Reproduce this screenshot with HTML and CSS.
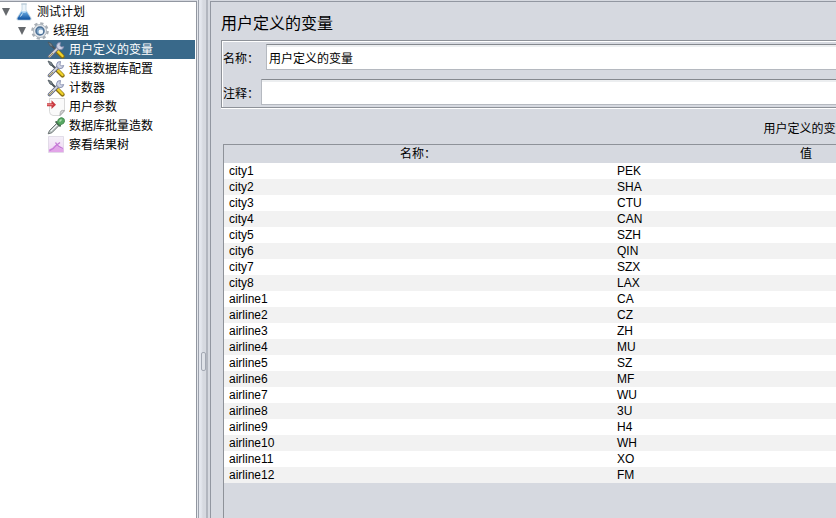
FILE: index.html
```html
<!doctype html>
<html lang="zh-CN">
  <head>
    <meta charset="UTF-8" />
    <meta name="viewport" content="width=device-width, initial-scale=1.0" />
    <title>用户定义的变量</title>
    <link rel="stylesheet" href="styles.css">
  </head>
  <body>
    <svg class="defs" width="0" height="0">
      <defs>
        <linearGradient id="flask-fill" x1="0" y1="0" x2="0" y2="1">
          <stop offset="0" stop-color="#6fb0e6" />
          <stop offset="1" stop-color="#0c4f9e" />
        </linearGradient>
        <linearGradient id="pink-fill" x1="0" y1="0" x2="0" y2="1">
          <stop offset="0" stop-color="#f4f0f8" />
          <stop offset="1" stop-color="#f0d6f4" />
        </linearGradient>
      </defs>
      <symbol id="tools" viewBox="0 0 18 18">
        <path d="M4 4 12 12" stroke="#4b5258" stroke-width="2" />
        <path d="M1 1 4.500 2.500 6 6 3 5z" fill="#7b858b" stroke="#4d575e" stroke-width=".8" />
        <path d="M10.500 10.500 15.500 15.500" stroke="#8a7010" stroke-width="4.200" stroke-linecap="round" />
        <path d="M10.700 10.200 15.500 15" stroke="#f0d32c" stroke-width="2.400" stroke-linecap="round" />
        <path d="M2.500 15.500 12 6" stroke="#666c80" stroke-width="3.600" stroke-linecap="round" />
        <path d="M2.500 15.300 12 5.800" stroke="#d3d5dc" stroke-width="1.800" stroke-linecap="round" />
        <path d="M13.500 1.500a3.600 3.600 0 1 0 3.200 4l-2.200.5-1.500-1.500z" fill="#ced3e4" stroke="#7981a6" stroke-width=".8" />
        <path d="M2 16 6 12" stroke="#a89b50" stroke-width="1" />
      </symbol>
    </svg>

    <nav class="tree">
      <ul>
        <li class="node">
          <svg class="arrow" viewBox="0 0 8 8"><path d="M0 0h8L4 8z" fill="#66696d" /></svg>
          <svg class="icon" viewBox="0 0 18 18">
            <path d="M7 1h4v6l5 8q.8 2-1 2H3q-1.800 0-1-2l5-8z" fill="#edf5fb" stroke="#b3c8d8" stroke-width=".7" />
            <path d="M6.500 8.500h5l4 6.500q.6 1.700-.9 1.700H3.400q-1.500 0-.9-1.700z" fill="url(#flask-fill)" />
            <path d="M6 1h6" stroke="#b9c9d4" />
            <ellipse cx="9" cy="9" rx="2.300" ry=".8" fill="#c7e3f7" />
            <path d="M5.500 13.500 7.500 10.500" stroke="#d8eefc" />
          </svg>
          <a href="#plan">测试计划</a>
        </li>
        <li class="node level-2">
          <svg class="arrow" viewBox="0 0 8 8"><path d="M0 0h8L4 8z" fill="#66696d" /></svg>
          <svg class="icon" viewBox="0 0 18 18">
            <circle cx="9" cy="9" r="7.600" fill="none" stroke="#a9afb6" stroke-width="2.400" stroke-dasharray="3.200 2.770" />
            <circle cx="9" cy="9" r="6.600" fill="#e1e4e8" stroke="#aab1b9" stroke-width=".8" />
            <circle cx="9" cy="9" r="4" fill="#7fa5c8" stroke="#4c6f94" stroke-width="1.500" />
            <circle cx="9.800" cy="9.800" r="2.300" fill="#f2f8fd" />
          </svg>
          <a href="#threads">线程组</a>
        </li>
        <li class="node level-3 selected">
          <svg class="icon"><use href="#tools" /></svg>
          <a href="#variables">用户定义的变量</a>
        </li>
        <li class="node level-3">
          <svg class="icon"><use href="#tools" /></svg>
          <a href="#database">连接数据库配置</a>
        </li>
        <li class="node level-3">
          <svg class="icon"><use href="#tools" /></svg>
          <a href="#counter">计数器</a>
        </li>
        <li class="node level-3">
          <svg class="icon" viewBox="0 0 18 18">
            <path d="M2.500.5h15v13l-4 4H6q-3.500-.5-3.500-4z" fill="#fafafa" stroke="#cfcfcf" stroke-width=".8" />
            <path d="M17.500 12.500q-2.500-.5-3.500.5t-1 4.500z" fill="#d6d6d6" stroke="#a0a0a0" stroke-width=".8" />
            <path d="M0 5.200h4.500V2.300L9 6.700l-4.500 4.400V8.300H0z" fill="#c93a40" />
            <path d="M0 6.700h6" stroke="#e98888" />
          </svg>
          <a href="#parameters">用户参数</a>
        </li>
        <li class="node level-3">
          <svg class="icon" viewBox="0 0 18 18">
            <path d="M1.200 16.800 2.500 13.500 9.500 6.500l2.300 2.300-7 7z" fill="#c3cbca" stroke="#5d6766" stroke-width=".9" />
            <path d="M4 14l6-6" stroke="#f7fafa" />
            <path d="M9.200 5 13 8.800" stroke="#47664f" stroke-width="2" stroke-linecap="round" />
            <path d="M10 5.500 11.500 2Q14.500-.5 16.700 1.500T16.500 6.500L12.800 8.200z" fill="#58a863" stroke="#3c8149" stroke-width=".7" />
            <path d="M12.500 4.500 14.500 2.500" stroke="#b4dfb5" stroke-width="1.400" />
          </svg>
          <a href="#batch">数据库批量造数</a>
        </li>
        <li class="node level-3">
          <svg class="icon" viewBox="0 0 18 18">
            <path d="M1.500.5h15v16h-15z" fill="url(#pink-fill)" stroke="#d9d1df" stroke-width=".7" />
            <path d="M2 16v-2.500q3-.5 5-3.500 2.500-2 4.500 1 2 2.500 5 1.500V16z" fill="#e2a5e8" />
            <path d="M2.500 14.500q4-1 6-4.500l4.500-3.500M8.500 6.500q2 4 7.500 6" fill="none" stroke="#c579d6" stroke-width="1.300" />
          </svg>
          <a href="#results">察看结果树</a>
        </li>
      </ul>
    </nav>

    <div class="splitter"><span class="grip"></span></div>

    <main class="panel">
      <h1>用户定义的变量</h1>

      <div class="fields">
        <div class="field">
          <label for="name">名称：</label>
          <input id="name" type="text" value="用户定义的变量">
        </div>
        <div class="field comment">
          <label for="comment">注释：</label>
          <input id="comment" type="text">
        </div>
      </div>

      <div class="variables">
        <h2 id="variables-title">用户定义的变量</h2>
        <div class="scroll">
          <table aria-labelledby="variables-title">
            <thead>
              <tr><th>名称：</th><th>值</th><th></th></tr>
            </thead>
            <tbody>
              <tr><td>city1</td><td>PEK</td><td></td></tr>
              <tr><td>city2</td><td>SHA</td><td></td></tr>
              <tr><td>city3</td><td>CTU</td><td></td></tr>
              <tr><td>city4</td><td>CAN</td><td></td></tr>
              <tr><td>city5</td><td>SZH</td><td></td></tr>
              <tr><td>city6</td><td>QIN</td><td></td></tr>
              <tr><td>city7</td><td>SZX</td><td></td></tr>
              <tr><td>city8</td><td>LAX</td><td></td></tr>
              <tr><td>airline1</td><td>CA</td><td></td></tr>
              <tr><td>airline2</td><td>CZ</td><td></td></tr>
              <tr><td>airline3</td><td>ZH</td><td></td></tr>
              <tr><td>airline4</td><td>MU</td><td></td></tr>
              <tr><td>airline5</td><td>SZ</td><td></td></tr>
              <tr><td>airline6</td><td>MF</td><td></td></tr>
              <tr><td>airline7</td><td>WU</td><td></td></tr>
              <tr><td>airline8</td><td>3U</td><td></td></tr>
              <tr><td>airline9</td><td>H4</td><td></td></tr>
              <tr><td>airline10</td><td>WH</td><td></td></tr>
              <tr><td>airline11</td><td>XO</td><td></td></tr>
              <tr><td>airline12</td><td>FM</td><td></td></tr>
            </tbody>
          </table>
        </div>
      </div>
    </main>
  </body>
</html>
```
FILE: styles.css
```css
* {
  box-sizing: border-box;
}

body {
  margin: 0;
  padding-top: 1px;
  display: flex;
  height: 100vh;
  overflow: hidden;
  background-color: #d6d9e0;
  color: #000;
  font-family: "Liberation Sans", "Noto Sans CJK SC", sans-serif;
  font-size: 12px;
}

.defs {
  position: absolute;
}

.tree {
  flex: 0 0 197px;
  background-color: #fff;
  border-top: 1px solid #9297a1;
  border-right: 1px solid #9297a1;
}

.tree ul {
  list-style: none;
  margin: 0;
  padding: 0;
}

.node {
  display: flex;
  align-items: center;
  height: 19px;
  margin-right: 1px;
  padding-left: 2px;
}

.level-2 {
  padding-left: 18px;
}

.level-3 {
  padding-left: 47px;
}

.selected {
  background-color: #39698a;
}

.node a {
  padding-top: 2px;
  color: #000;
  line-height: 17px;
  text-decoration: none;
  white-space: nowrap;
}

.selected a {
  color: #fff;
}

.arrow {
  width: 8px;
  height: 8px;
  margin-right: 5px;
}

.icon {
  width: 18px;
  height: 18px;
  margin-right: 4px;
  fill: none;
}

.splitter {
  flex: 0 0 13px;
  margin-top: -1px;
  padding: 352px 2px 0;
  border-left: 1px solid #e4e7ec;
  background: linear-gradient(to right, #9da2ad 1px, #e4e7ee 1px, #e4e7ee 3px, #d6d9e0 5px, #d6d9e0 8px, #8e939e 9px, #d6d9e0 10px);
}

.grip {
  display: block;
  width: 5px;
  height: 19px;
  margin-left: 1px;
  border: 1px solid #a3a8b3;
  border-radius: 2px;
  background-color: #dfe2e8;
}

.panel {
  flex: 1;
  min-width: 0;
  display: flex;
  flex-direction: column;
  padding: 10px 0 0 10px;
  border-top: 1px solid #9297a1;
  border-left: 1px solid #9297a1;
  overflow: hidden;
}

h1 {
  margin: 0 0 4px;
  font-size: 16px;
  font-weight: normal;
  line-height: 24px;
}

.fields {
  padding: 3px 0 2px 1px;
  border: 1px solid #8e9299;
  border-right: 0;
  box-shadow: inset 1px 1px #fff, 0 1px #fff;
}

.field {
  display: flex;
  align-items: center;
}

.field label {
  width: 43px;
  white-space: nowrap;
}

.comment {
  margin-top: 9px;
}

.comment label {
  width: 38px;
}

.field input {
  flex: 1;
  min-width: 0;
  height: 26px;
  padding: 0 2px;
  border: 1px solid #b5b9c0;
  border-top-color: #85898f;
  border-right: 0;
  border-radius: 0;
  background-color: #fff;
  box-shadow: inset 0 2px #eceef0;
  color: #000;
  font: inherit;
}

.variables {
  flex: 1;
  width: 1165px;
  margin: 11px 0 0 2px;
  display: flex;
  flex-direction: column;
}

h2 {
  margin: 0 0 4px;
  font-size: 12px;
  font-weight: normal;
  line-height: 21px;
  text-align: center;
}

.scroll {
  flex: 1;
  border-top: 1px solid #8e9299;
  border-left: 1px solid #8e9299;
}

table {
  width: 100%;
  table-layout: fixed;
  border-collapse: collapse;
}

th {
  height: 18px;
  padding: 1px 0 0;
  font-weight: normal;
  line-height: 17px;
}

td {
  height: 16px;
  padding: 0 5px;
  line-height: 16px;
}

tbody tr {
  background-color: #fff;
}

tbody tr:nth-child(even) {
  background-color: #f2f2f2;
}
```
